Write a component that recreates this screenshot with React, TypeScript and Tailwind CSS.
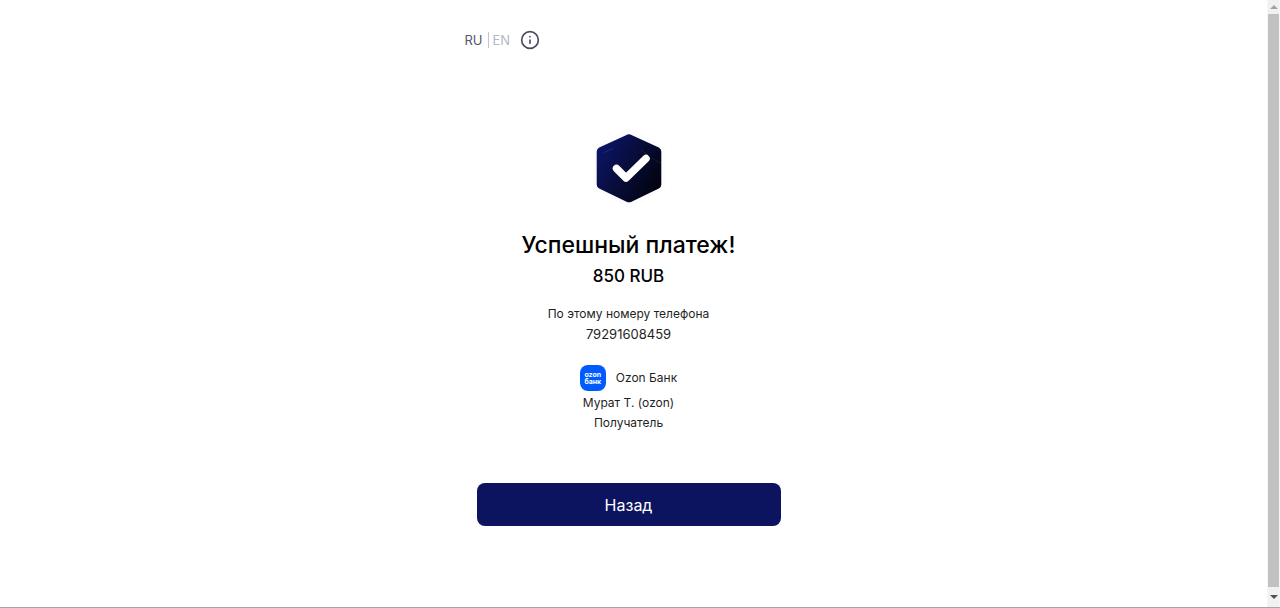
import React from 'react'
import { FiInfo } from 'react-icons/fi'

const payment = {
    title: 'Успешный платеж!',
    amount: '850 RUB',
    phoneLabel: 'По этому номеру телефона',
    phone: '79291608459',
    bank: 'Ozon Банк',
    receiver: 'Мурат Т. (ozon)',
    receiverLabel: 'Получатель',
}

const SuccessIcon = () => (
    <svg width="84" height="84" viewBox="0 0 84 84" fill="none" aria-hidden="true">
        <defs>
            <linearGradient id="hex" x1="12" y1="24" x2="72" y2="60" gradientUnits="userSpaceOnUse">
                <stop stopColor="#0b1465" />
                <stop offset="0.45" stopColor="#080d3c" />
                <stop offset="1" stopColor="#02030f" />
            </linearGradient>
        </defs>
        <path d="M42 6 74 23V61L42 78 10 61V23Z" fill="#fcfcff" stroke="#fcfcff" strokeWidth="8" strokeLinejoin="round" />
        <path d="M39 9.2Q42 7.4 45 9.2L71.8 21.4Q74.3 22.7 74.3 25.5V58.5Q74.3 61.3 71.8 62.6L45 75.4Q42 77.2 39 75.4L12.2 62.6Q9.7 61.3 9.7 58.5V25.5Q9.7 22.7 12.2 21.4Z" fill="url(#hex)" />
        <path d="M17 26.5 26 22.5" stroke="#263179" strokeWidth="0.8" />
        <path d="M54 24 61 29M65 32 73 37" stroke="#20264a" strokeWidth="0.6" />
        <path d="M29.5 42.5 39 52 59 32.5" stroke="#fff" strokeWidth="7.5" strokeLinecap="round" strokeLinejoin="round" />
    </svg>
)

const BankLogo = () => (
    <div className="flex h-[26px] w-[26px] flex-col items-center justify-center rounded-lg bg-[#005bff] text-[7px] font-bold leading-[7px] text-white">
        <span>ozon</span>
        <span>банк</span>
    </div>
)

const Scrollbar = () => (
    <div className="flex w-[13px] shrink-0 flex-col border-x border-[#f6f6f6] bg-[#f1f1f1]" aria-hidden="true">
        <div className="flex h-[14px] items-center justify-center">
            <svg width="8" height="4" viewBox="0 0 8 4"><path d="M0 4 4 0 8 4Z" fill="#a3a3a3" /></svg>
        </div>
        <div className="flex-1 bg-[#c1c1c1]" />
        <div className="flex h-5 items-center justify-center">
            <svg width="8" height="4" viewBox="0 0 8 4"><path d="M0 0H8L4 4Z" fill="#505050" /></svg>
        </div>
    </div>
)

const App = () => {
    return (
        <div className="flex min-h-screen border-b border-[#a6a6a6] bg-white font-['Inter','Liberation_Sans',sans-serif] text-[#1f1f24]">
            <main className="flex flex-1 justify-center pr-[10px]">
                <div className="w-full max-w-[328px]">
                    <header className="flex items-center pt-[30px] text-[13px] leading-5">
                        <button type="button" className="border-r border-[#c3c4d2] pr-[5px] leading-4 text-[#55576a]">RU</button>
                        <button type="button" className="pl-1 leading-4 text-[#b4b7c6]">EN</button>
                        <button type="button" aria-label="Info" className="ml-[10px] text-[#4b4d5f]">
                            <FiInfo size={20} />
                        </button>
                    </header>

                    <section className="flex flex-col items-center px-3 pt-[76px] text-center text-xs leading-5">
                        <SuccessIcon />
                        <h1 className="mt-5 text-[23px] font-medium leading-[30px] text-black">{payment.title}</h1>
                        <p className="text-[17px] font-medium leading-8 text-black">{payment.amount}</p>
                        <p className="mt-3">{payment.phoneLabel}</p>
                        <p className="text-[13px] leading-5">{payment.phone}</p>
                        <div className="mt-[21px] flex items-center gap-[10px]">
                            <BankLogo />
                            <span>{payment.bank}</span>
                        </div>
                        <p className="mt-[2px]">{payment.receiver}</p>
                        <p>{payment.receiverLabel}</p>
                        <button type="button" className="mt-[50px] h-[43px] w-full rounded-lg bg-[#0d145f] text-base text-white">
                            Назад
                        </button>
                    </section>
                </div>
            </main>
            <Scrollbar />
        </div>
    )
}

export default App
